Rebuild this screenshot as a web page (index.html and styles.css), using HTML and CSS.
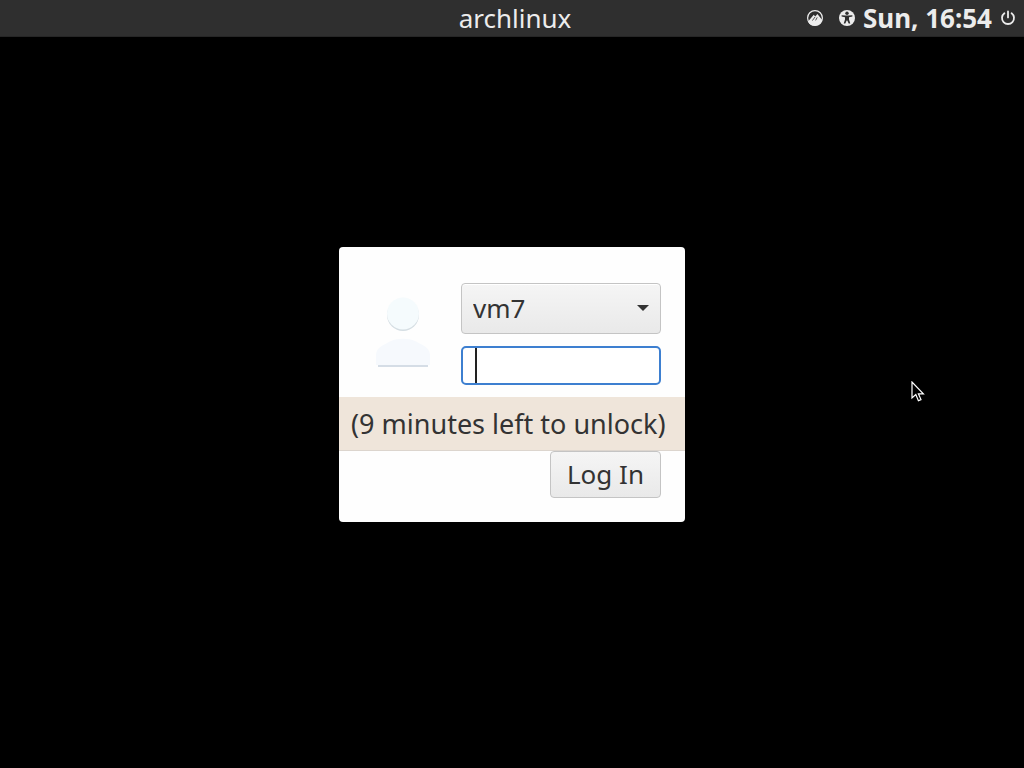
FILE: index.html
```html
<!DOCTYPE html>
<html lang="en">
<head>
    <meta charset="UTF-8">
    <meta name="viewport" content="width=device-width, initial-scale=1.0">
    <title>archlinux | Log In</title>
    <link rel="stylesheet" href="styles.css">
</head>
<body>
    <header class="panel">
        <h1 class="hostname">archlinux</h1>
        <div class="indicators">
            <button class="indicator" type="button" aria-label="Session">
                <svg viewBox="0 0 16 16" width="16" height="16">
                    <circle cx="8" cy="8" r="7.4" fill="none" stroke="currentColor" stroke-width="1.2"/>
                    <path d="M1 11.4 6.8 4.8 8.2 6.6 10.4 4 15.2 10A7.6 7.6 0 0 1 1 11.4Z" fill="currentColor"/>
                    <path d="M5.4 10.6 8 7M8.6 10.4 10.2 7.4" stroke="#2f2f2f" stroke-width="0.8" fill="none"/>
                </svg>
            </button>
            <button class="indicator" type="button" aria-label="Accessibility">
                <svg viewBox="0 0 16 16" width="16" height="16">
                    <circle cx="8" cy="8" r="8" fill="currentColor"/>
                    <circle cx="8" cy="3.2" r="1.7" fill="#2f2f2f"/>
                    <path d="M2.6 5.2 6.6 5.6H9.4L13.4 5.2V6.6L10 7.3V9.4L11.3 13.6H9.7L8.3 10.4H7.7L6.3 13.6H4.7L6 9.4V7.3L2.6 6.6Z" fill="#2f2f2f"/>
                </svg>
            </button>
            <time class="clock" datetime="16:54">Sun, 16:54</time>
            <button class="indicator" type="button" aria-label="Power">
                <svg viewBox="0 0 16 16" width="16" height="16" fill="none" stroke="currentColor" stroke-width="1.8" stroke-linecap="round">
                    <path d="M4.4 3.2A6 6 0 1 0 11.6 3.2M8 1.4V7.4"/>
                </svg>
            </button>
        </div>
    </header>

    <main class="screen">
        <form class="login">
            <div class="login-fields">
                <svg class="avatar" viewBox="0 0 80 80" aria-hidden="true">
                    <path d="M13 71V61C13 54 20 51 28 47C34 44 46 44 52 47C60 51 67 54 67 61V71Z" fill="#f6f9fd"/>
                    <path d="M15 72H65" stroke="#d5dde6" stroke-width="2"/>
                    <circle cx="40" cy="21" r="16" fill="#d5dee3"/>
                    <circle cx="40" cy="19.5" r="16" fill="#f5fbfd"/>
                </svg>
                <div class="inputs">
                    <div class="user-select">
                        <select id="user" aria-label="User">
                            <option>vm7</option>
                        </select>
                        <svg class="arrow" viewBox="0 0 12 6" width="12" height="6"><path d="M0 0H12L6 6Z" fill="currentColor"/></svg>
                    </div>
                    <input class="password" type="password" id="password" aria-label="Password" autofocus>
                </div>
            </div>
            <p class="message">(9 minutes left to unlock)</p>
            <div class="actions">
                <button class="login-btn" type="button">Log In</button>
            </div>
        </form>
    </main>

    <svg class="pointer" viewBox="0 0 14 22" width="14" height="22" aria-hidden="true">
        <path d="M1 1V17L4.8 13.6L7.4 19.8L10 18.6L7.4 12.8H12.4Z" fill="#000" stroke="#fff" stroke-width="1.2"/>
    </svg>
</body>
</html>
```
FILE: styles.css
```css
:root {
    --panel: #2f2f2f;
    --text: #333;
    --accent: #3d7fd0;
    --border: #c4c4c4;
}

* {
    box-sizing: border-box;
    margin: 0;
    padding: 0;
    font-family: 'Noto Sans', sans-serif;
}

body {
    display: flex;
    flex-direction: column;
    min-height: 100vh;
    background: #000;
    color: var(--text);
    font-size: 26px;
    position: relative;
}

/* Top panel */
.panel {
    display: grid;
    grid-template-columns: 1fr auto 1fr;
    align-items: center;
    padding: 0 8px 0 14px;
    background: var(--panel);
    border-bottom: 1px solid #262626;
    color: #ececec;
    line-height: 36px;
}

.hostname {
    grid-column: 2;
    font-size: 26px;
    font-weight: normal;
}

.indicators {
    display: flex;
    align-items: center;
    justify-content: flex-end;
    gap: 8px;
}

.indicator {
    display: flex;
    border: none;
    background: none;
    color: inherit;
}

.indicator:first-child {
    margin-right: 8px;
}

.clock {
    font-weight: bold;
}

/* Login window */
.screen {
    flex: 1;
    display: grid;
    place-items: center;
    padding-bottom: 36px;
}

.login {
    background: #fefefe;
    border-radius: 4px;
    padding-bottom: 24px;
}

.login-fields {
    display: flex;
    align-items: center;
    gap: 18px;
    padding: 36px 24px 12px;
}

.avatar {
    width: 80px;
    height: 80px;
}

.inputs {
    display: flex;
    flex-direction: column;
    gap: 12px;
    width: 200px;
}

.user-select {
    position: relative;
}

.user-select select {
    display: block;
    appearance: none;
    width: 100%;
    height: 51px;
    padding: 0 32px 2px 11px;
    border: 1px solid var(--border);
    border-radius: 4px;
    background: linear-gradient(#f5f5f5, #e9e9e9);
    box-shadow: inset 0 1px #fff;
    color: var(--text);
    font-size: 26px;
}

.arrow {
    position: absolute;
    right: 12px;
    top: 22px;
    pointer-events: none;
}

.password {
    width: 100%;
    height: 39px;
    padding: 0 12px;
    border: 2px solid var(--accent);
    border-radius: 5px;
    outline: none;
    background: linear-gradient(#222, #222) 12px 0 / 2px 100% no-repeat #fff;
    caret-color: transparent;
    font-size: 26px;
}

.message {
    padding: 0 12px;
    background: #efe5da;
    border-bottom: 1px solid #dcd5ce;
    font-size: 27px;
    line-height: 53px;
}

.actions {
    display: flex;
    justify-content: flex-end;
    padding: 0 24px;
}

.login-btn {
    height: 47px;
    padding: 0 16px 2px;
    border: 1px solid var(--border);
    border-radius: 4px;
    background: linear-gradient(#f5f5f5, #e9e9e9);
    color: var(--text);
    font-size: 26px;
}

/* Mouse pointer */
.pointer {
    position: absolute;
    left: 911px;
    top: 381px;
}
```
